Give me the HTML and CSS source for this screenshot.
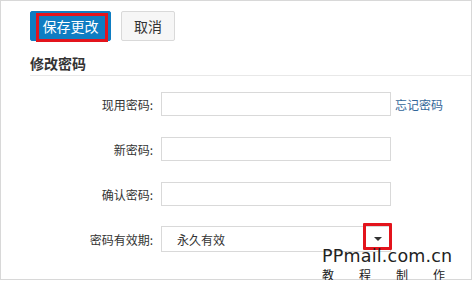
FILE: index.html
```html
<!DOCTYPE html>
<html lang="zh">
<head>
<meta charset="utf-8">
<link rel="stylesheet" href="styles.css">
</head>
<body>
<div class="frame">
  <div class="actions">
    <button class="btn btn-primary">保存更改</button>
    <button class="btn btn-default">取消</button>
  </div>
  <h3 class="section-title">修改密码</h3>
  <div class="form">
    <div class="row">
      <label class="label">现用密码:</label>
      <div class="input"></div>
      <a class="link">忘记密码</a>
    </div>
    <div class="row">
      <label class="label">新密码:</label>
      <div class="input"></div>
    </div>
    <div class="row">
      <label class="label">确认密码:</label>
      <div class="input"></div>
    </div>
    <div class="row">
      <label class="label">密码有效期:</label>
      <div class="select"><span>永久有效</span><i class="caret"></i></div>
    </div>
  </div>
  <div class="mark mark-save"></div>
  <div class="mark mark-caret"></div>
  <div class="watermark">
    <div class="wm-en">PPmail.com.cn</div>
    <div class="wm-cn"><span>教</span><span>程</span><span>制</span><span>作</span></div>
  </div>
</div>
</body>
</html>
```
FILE: styles.css
```css
html, body {
  margin: 0;
  padding: 0;
  background: #fff;
}
body {
  font-family: "Noto Sans CJK SC", "Noto Sans", sans-serif;
  color: #333;
}
.frame {
  position: relative;
  box-sizing: border-box;
  width: 472px;
  height: 280px;
  border: 1px solid #d8d8d8;
  padding: 10px 0 0 29px;
}
.actions {
  display: flex;
  gap: 10px;
}
.btn {
  height: 30px;
  font-family: inherit;
  font-size: 14px;
  line-height: 28px;
  padding: 0;
  border-radius: 2px;
  cursor: pointer;
}
.btn-primary {
  width: 81px;
  background: #0f7dc2;
  border: 1px solid #0f7dc2;
  color: #fff;
}
.btn-default {
  width: 54px;
  background: #f6f6f6;
  border: 1px solid #d9d9d9;
  color: #333;
}
.section-title {
  margin: 12px 0 0 0;
  font-size: 14px;
  font-weight: bold;
  line-height: 20px;
  height: 22px;
  border-bottom: 1px solid #e8e8e8;
}
.form {
  display: flex;
  flex-direction: column;
  gap: 21px;
  margin-top: 16px;
}
.row {
  display: flex;
  align-items: center;
  height: 24px;
}
.label {
  width: 123px;
  text-align: right;
  font-size: 12px;
  color: #333;
  margin-right: 8px;
}
.input {
  box-sizing: border-box;
  width: 230px;
  height: 24px;
  border: 1px solid #d9d9d9;
}
.link {
  margin-left: 4px;
  font-size: 12px;
  color: #336699;
}
.select {
  box-sizing: border-box;
  width: 230px;
  height: 26px;
  border: 1px solid #d9d9d9;
  display: flex;
  align-items: center;
  padding-left: 15px;
  font-size: 12px;
  color: #333;
  position: relative;
}
.caret {
  position: absolute;
  left: 212px;
  top: 10px;
  width: 0;
  height: 0;
  border-left: 4px solid transparent;
  border-right: 4px solid transparent;
  border-top: 4px solid #333;
}
.mark {
  position: absolute;
  box-sizing: border-box;
  border: 3px solid #e3141c;
}
.mark-save {
  left: 35px;
  top: 12px;
  width: 72px;
  height: 29px;
}
.mark-caret {
  left: 362px;
  top: 222px;
  width: 29px;
  height: 27px;
  border-radius: 1px;
}
.watermark {
  position: absolute;
  left: 321px;
  top: 245px;
  width: 123px;
  color: #222;
  font-family: "DejaVu Sans", "Noto Sans", sans-serif;
}
.wm-en {
  font-size: 17.5px;
  line-height: 21px;
  letter-spacing: 0.2px;
}
.wm-cn {
  display: flex;
  justify-content: space-between;
  font-family: "Noto Sans CJK SC", sans-serif;
  font-size: 12px;
  line-height: 15px;
}
```
